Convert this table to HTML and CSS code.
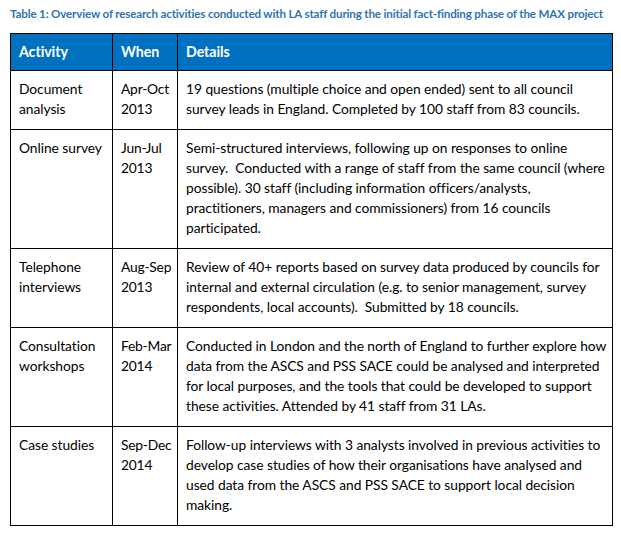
FILE: index.html
```html
<!DOCTYPE html>
<html>
<head>
<meta charset="utf-8">
<link rel="stylesheet" href="styles.css">
</head>
<body>
<p class="caption">Table 1: Overview of research activities conducted with LA staff during the initial fact-finding phase of the MAX project</p>
<table class="tbl">
  <colgroup>
    <col class="c1"><col class="c2"><col class="c3">
  </colgroup>
  <thead>
    <tr><th>Activity</th><th>When</th><th>Details</th></tr>
  </thead>
  <tbody>
    <tr>
      <td>Document<br>analysis</td>
      <td>Apr-Oct<br>2013</td>
      <td>19 questions (multiple choice and open ended) sent to all council<br>survey leads in England. Completed by 100 staff from 83 councils.</td>
    </tr>
    <tr>
      <td>Online survey</td>
      <td>Jun-Jul<br>2013</td>
      <td>Semi-structured interviews, following up on responses to online<br>survey.&nbsp; Conducted with a range of staff from the same council (where<br>possible). 30 staff (including information officers/analysts,<br>practitioners, managers and commissioners) from 16 councils<br>participated.</td>
    </tr>
    <tr>
      <td>Telephone<br>interviews</td>
      <td>Aug-Sep<br>2013</td>
      <td>Review of 40+ reports based on survey data produced by councils for<br>internal and external circulation (e.g. to senior management, survey<br>respondents, local accounts).&nbsp; Submitted by 18 councils.</td>
    </tr>
    <tr>
      <td>Consultation<br>workshops</td>
      <td>Feb-Mar<br>2014</td>
      <td>Conducted in London and the north of England to further explore how<br>data from the ASCS and PSS SACE could be analysed and interpreted<br>for local purposes, and the tools that could be developed to support<br>these activities. Attended by 41 staff from 31 LAs.</td>
    </tr>
    <tr>
      <td>Case studies</td>
      <td>Sep-Dec<br>2014</td>
      <td>Follow-up interviews with 3 analysts involved in previous activities to<br>develop case studies of how their organisations have analysed and<br>used data from the ASCS and PSS SACE to support local decision<br>making.</td>
    </tr>
  </tbody>
</table>
</body>
</html>
```
FILE: styles.css
```css
html, body {
  margin: 0;
  padding: 0;
  background: #ffffff;
}
body {
  padding: 7px 10px 0 10px;
  font-family: Lato, "Open Sans", sans-serif;
  color: #000000;
}
.caption {
  margin: 0 0 12px 0;
  font-size: 11.6px;
  font-weight: bold;
  color: #2e74b5;
  line-height: 14px;
  letter-spacing: -0.16px;
  white-space: nowrap;
}
.tbl {
  border-collapse: collapse;
  width: 602px;
  table-layout: fixed;
  font-size: 13.8px;
  line-height: 20px;
  letter-spacing: -0.05px;
}
.c1 { width: 102px; }
.c2 { width: 65px; }
.c3 { width: 435px; }
.tbl th, .tbl td {
  border: 1px solid #000;
  text-align: left;
  vertical-align: top;
  white-space: nowrap;
  padding: 8px 8px 10px 8px;
}
.tbl td:nth-child(2) {
  padding-left: 8px;
  padding-right: 2px;
  letter-spacing: -0.2px;
}
.tbl th {
  background: #0070c0;
  color: #ffffff;
  font-weight: bold;
  font-size: 14.2px;
  padding: 8px 8px 8px 8px;
  height: 19px;
}
```
